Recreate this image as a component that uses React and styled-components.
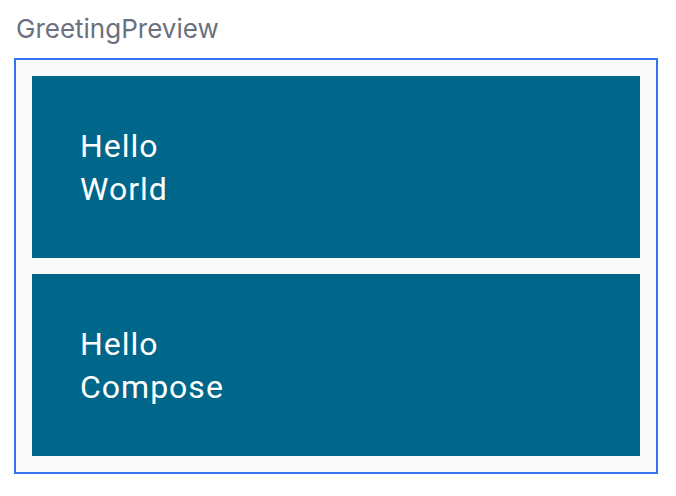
import React from "react";
import styled, { createGlobalStyle } from "styled-components";

const GlobalStyle = createGlobalStyle`
  html, body { margin: 0; padding: 0; background: #ffffff; }
  body { font-family: "Roboto", "Liberation Sans", sans-serif; }
`;

const Page = styled.div`
  padding: 13px 18px 0 14px;
  display: flex;
  flex-direction: column;
`;

const Label = styled.div`
  font-family: "Inter", "Noto Sans", sans-serif;
  font-size: 26px;
  line-height: 31px;
  color: #6c707e;
  padding-left: 2px;
  margin-bottom: 14px;
`;

const Frame = styled.div`
  border: 2px solid #3574f0;
  background: #fafafa;
  padding: 16px;
  box-sizing: border-box;
  width: 644px;
  display: flex;
  flex-direction: column;
  gap: 16px;
`;

const Card = styled.div`
  background: #00668a;
  height: 182px;
  box-sizing: border-box;
  padding: 49px 48px 0 48px;
  color: #ffffff;
  font-family: "Roboto", "Liberation Sans", sans-serif;
  font-size: 32px;
  line-height: 43px;
  letter-spacing: 1px;
`;

const Line = styled.div``;

const greetings = ["World", "Compose"];

export default function App() {
  return (
    <>
      <GlobalStyle />
      <Page>
        <Label>GreetingPreview</Label>
        <Frame>
          {greetings.map((name) => (
            <Card key={name}>
              <Line>Hello</Line>
              <Line>{name}</Line>
            </Card>
          ))}
        </Frame>
      </Page>
    </>
  );
}
